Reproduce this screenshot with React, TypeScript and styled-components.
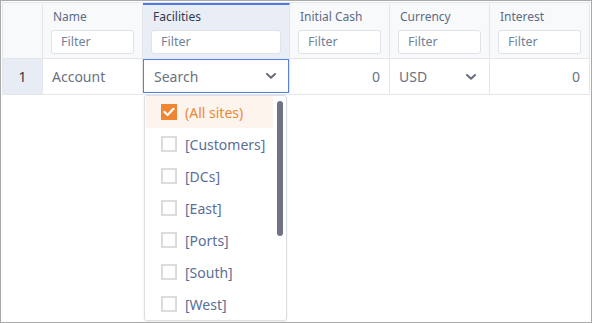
import { FC } from 'react'
import styled, { createGlobalStyle } from 'styled-components'

const GlobalStyle = createGlobalStyle`
  html, body {
    margin: 0;
    padding: 0;
    background: #ffffff;
  }
  body {
    font-family: 'Noto Sans', 'Open Sans', sans-serif;
  }
`

const Frame = styled.div`
  position: relative;
  width: 592px;
  height: 323px;
  box-sizing: border-box;
  border: 1px solid #a9a9a9;
  padding: 1px 0 0 1px;
  background: #fff;
  overflow: hidden;
`

const Grid = styled.div`
  display: grid;
  grid-template-columns: 40px 100px 147px 100px 100px 100px;
  border-left: 1px solid #e3e6eb;
  border-top: 1px solid #e3e6eb;
  width: 588px;
  box-sizing: border-box;
`

const HeadCell = styled.div<{ $active?: boolean }>`
  height: 56px;
  box-sizing: border-box;
  border-right: 1px solid #e3e6eb;
  border-bottom: 1px solid #e3e6eb;
  border-top: 2px solid ${(p) => (p.$active ? '#4d79e2' : 'transparent')};
  background: ${(p) => (p.$active ? '#e9edf5' : '#f8f9fb')};
  display: flex;
  flex-direction: column;
  padding: 4px 8px 0 8px;
  gap: 5px;
`

const HeadLabel = styled.div<{ $active?: boolean }>`
  font-size: 12px;
  line-height: 16px;
  padding-left: 2px;
  color: ${(p) => (p.$active ? '#2f3a52' : '#5c6b86')};
`

const FilterBox = styled.div`
  height: 24px;
  box-sizing: border-box;
  border: 1px solid #dfe2e7;
  border-radius: 3px;
  background: #fff;
  font-size: 12.5px;
  line-height: 22px;
  padding-left: 9px;
  color: #71819b;
`

const Cell = styled.div<{ $align?: string; $bg?: string }>`
  height: 36px;
  box-sizing: border-box;
  border-right: 1px solid #e3e6eb;
  border-bottom: 1px solid #e3e6eb;
  background: ${(p) => p.$bg || '#fff'};
  display: flex;
  align-items: center;
  justify-content: ${(p) => p.$align || 'flex-start'};
  padding: 0 9px;
  font-size: 14px;
  color: #6b7280;
`

const RowNum = styled(Cell)`
  justify-content: center;
  color: #333a47;
  font-size: 14px;
  padding: 0;
`

const EditorCell = styled.div`
  height: 36px;
  box-sizing: border-box;
  border-right: 1px solid #e3e6eb;
  border-bottom: 1px solid #e3e6eb;
  background: #fff;
  position: relative;
`

const Editor = styled.div`
  position: absolute;
  inset: 0 0 1px 0;
  border: 1px solid #5a80dc;
  display: flex;
  align-items: center;
  justify-content: space-between;
  padding: 0 12px 0 10px;
  font-size: 14px;
  color: #6b7280;
  background: #fff;
`

const SelectCell = styled(Cell)`
  justify-content: space-between;
  padding: 0 13px 0 9px;
`

const Dropdown = styled.div`
  position: absolute;
  left: 143px;
  top: 94px;
  width: 143px;
  height: 226px;
  box-sizing: border-box;
  border: 1px solid #dcdfe3;
  border-radius: 3px;
  background: #fff;
  box-shadow: 0 1px 3px rgba(0, 0, 0, 0.08);
  display: flex;
`

const List = styled.div`
  flex: 1;
  padding: 0 0 0 1px;
  display: flex;
  flex-direction: column;
`

const Item = styled.div<{ $selected?: boolean }>`
  height: 32px;
  flex-shrink: 0;
  display: flex;
  align-items: center;
  gap: 8px;
  padding-left: 15px;
  background: ${(p) => (p.$selected ? '#fdf5ed' : 'transparent')};
  font-size: 14px;
  color: ${(p) => (p.$selected ? '#ef8734' : '#5a6e97')};
`

const Box = styled.div<{ $checked?: boolean }>`
  width: 16px;
  height: 16px;
  box-sizing: border-box;
  border: ${(p) => (p.$checked ? 'none' : '2px solid #dcdcdc')};
  background: ${(p) => (p.$checked ? '#ef8633' : '#fff')};
  display: flex;
  align-items: center;
  justify-content: center;
`

const Track = styled.div`
  width: 13px;
  display: flex;
  justify-content: center;
  padding-top: 5px;
`

const Thumb = styled.div`
  width: 6px;
  height: 135px;
  border-radius: 3px;
  background: #6f7385;
`

const Chevron: FC = () => (
  <svg width="10" height="6" viewBox="0 0 10 6">
    <path
      d="M1 1 L5 4.8 L9 1"
      fill="none"
      stroke="#686e7c"
      strokeWidth="2"
      strokeLinecap="round"
      strokeLinejoin="round"
    />
  </svg>
)

const Check: FC = () => (
  <svg width="12" height="10" viewBox="0 0 12 10">
    <path
      d="M1.5 5 L4.6 8 L10.5 1.8"
      fill="none"
      stroke="#fff"
      strokeWidth="2.2"
      strokeLinecap="round"
      strokeLinejoin="round"
    />
  </svg>
)

const columns = ['Name', 'Facilities', 'Initial Cash', 'Currency', 'Interest']
const sites = [
  '(All sites)',
  '[Customers]',
  '[DCs]',
  '[East]',
  '[Ports]',
  '[South]',
  '[West]',
]

const App: FC = () => {
  return (
    <>
      <GlobalStyle />
      <Frame>
        <Grid>
          <HeadCell />
          {columns.map((c) => (
            <HeadCell key={c} $active={c === 'Facilities'}>
              <HeadLabel $active={c === 'Facilities'}>{c}</HeadLabel>
              <FilterBox>Filter</FilterBox>
            </HeadCell>
          ))}
          <RowNum $bg="#e8ecf4">1</RowNum>
          <Cell>Account</Cell>
          <EditorCell>
            <Editor>
              <span>Search</span>
              <Chevron />
            </Editor>
          </EditorCell>
          <Cell $align="flex-end">0</Cell>
          <SelectCell>
            <span>USD</span>
            <Chevron />
          </SelectCell>
          <Cell $align="flex-end">0</Cell>
        </Grid>
        <Dropdown>
          <List>
            {sites.map((s, i) => (
              <Item key={s} $selected={i === 0}>
                <Box $checked={i === 0}>{i === 0 && <Check />}</Box>
                {s}
              </Item>
            ))}
          </List>
          <Track>
            <Thumb />
          </Track>
        </Dropdown>
      </Frame>
    </>
  )
}

export default App
